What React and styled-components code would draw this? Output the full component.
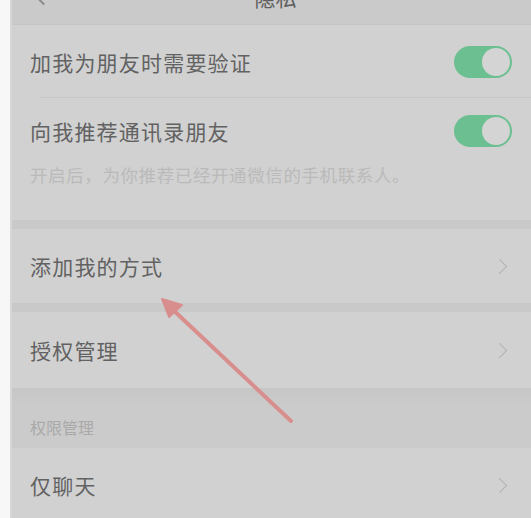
import React from "react"
import styled, { createGlobalStyle } from "styled-components"

const Global = createGlobalStyle`
	html, body {
		margin: 0;
		padding: 0;
		background: #f7f7f7;
	}
	body {
		font-family: "Noto Sans CJK SC", "Noto Sans", sans-serif;
	}
`

const Screen = styled.div`
	position: relative;
	width: 531px;
	height: 518px;
	overflow: hidden;
	padding-left: 10px;
	box-sizing: border-box;
`

const Main = styled.div`
	display: flex;
	flex-direction: column;
	height: 100%;
	background: #c9c9c9;
	border-left: 2px solid #d6d6d6;
`

const Header = styled.div`
	height: 24px;
	flex-shrink: 0;
	display: flex;
	align-items: flex-end;
	justify-content: center;
	position: relative;
	background: #cacaca;
	border-bottom: 1px solid #c5c5c5;
	color: #5e5e5e;
`

const Title = styled.div`
	font-size: 21px;
	line-height: 22px;
	margin-bottom: 16px;
	margin-left: 8px;
`

const Back = styled.div`
	position: absolute;
	left: 26px;
	top: -8px;
	width: 9px;
	height: 9px;
	border-left: 2px solid #8a8a8a;
	border-bottom: 2px solid #8a8a8a;
	transform: rotate(45deg);
`

const Group = styled.div`
	background: #d1d1d1;
	margin-top: ${p => p.gap || 0}px;
	flex-shrink: 0;
`

const Row = styled.div`
	display: flex;
	align-items: center;
	justify-content: space-between;
	height: ${p => p.h}px;
	padding: 0 22px 0 18px;
	box-sizing: border-box;
`

const Cell = styled.div`
	padding: ${p => p.pad || "0"};
	position: relative;
	&::after {
		content: "";
		display: ${p => (p.line ? "block" : "none")};
		position: absolute;
		left: 28px;
		right: 0;
		bottom: 0;
		height: 1px;
		background: #c8c8c8;
	}
`

const Label = styled.div`
	font-size: 21px;
	letter-spacing: 1.2px;
	color: #626262;
`

const Hint = styled.div`
	font-size: 17.5px;
	color: #bababa;
	padding: 0 18px;
	margin-top: -2px;
	letter-spacing: 0.6px;
`

const Toggle = styled.div`
	width: 58px;
	height: 32px;
	border-radius: 16px;
	background: #6cbf90;
	position: relative;
	margin-right: -3px;
	&::after {
		content: "";
		position: absolute;
		right: 2px;
		top: 2px;
		width: 28px;
		height: 28px;
		border-radius: 50%;
		background: #d4d4d4;
	}
`

const Chevron = styled.div`
	width: 10px;
	height: 10px;
	border-right: 1.5px solid #b2b2b2;
	border-top: 1.5px solid #b2b2b2;
	transform: rotate(45deg);
	margin-right: 4px;
`

const SectionLabel = styled.div`
	flex-shrink: 0;
	height: 60px;
	display: flex;
	align-items: flex-end;
	padding: 0 18px 9px;
	box-sizing: border-box;
	font-size: 16px;
	color: #a9a9a9;
	background: linear-gradient(#c6c6c6, #cbcbcb 30%);
`

const Arrow = styled.svg`
	position: absolute;
	left: 0;
	top: 0;
	pointer-events: none;
`

export default function App() {
	return (
		<Screen>
			<Global />
			<Main>
				<Header>
					<Back />
					<Title>隐私</Title>
				</Header>
				<Group>
					<Cell line>
						<Row h={73}>
							<Label>加我为朋友时需要验证</Label>
							<Toggle />
						</Row>
					</Cell>
					<Cell pad="0 0 33px">
						<Row h={66}>
							<Label>向我推荐通讯录朋友</Label>
							<Toggle />
						</Row>
						<Hint>开启后，为你推荐已经开通微信的手机联系人。</Hint>
					</Cell>
				</Group>
				<Group gap={9}>
					<Row h={74}>
						<Label>添加我的方式</Label>
						<Chevron />
					</Row>
				</Group>
				<Group gap={9}>
					<Row h={76}>
						<Label>授权管理</Label>
						<Chevron />
					</Row>
				</Group>
				<SectionLabel>权限管理</SectionLabel>
				<Group>
					<Row h={74}>
						<Label>仅聊天</Label>
						<Chevron />
					</Row>
				</Group>
			</Main>
			<Arrow width="531" height="518" viewBox="0 0 531 518">
				<line x1="291" y1="421" x2="170" y2="307" stroke="#d98e8e" strokeWidth="4" strokeLinecap="round" />
				<polygon points="162,299 182,305 169,317" fill="#d98e8e" stroke="#d98e8e" strokeWidth="2" strokeLinejoin="round" />
			</Arrow>
		</Screen>
	)
}
